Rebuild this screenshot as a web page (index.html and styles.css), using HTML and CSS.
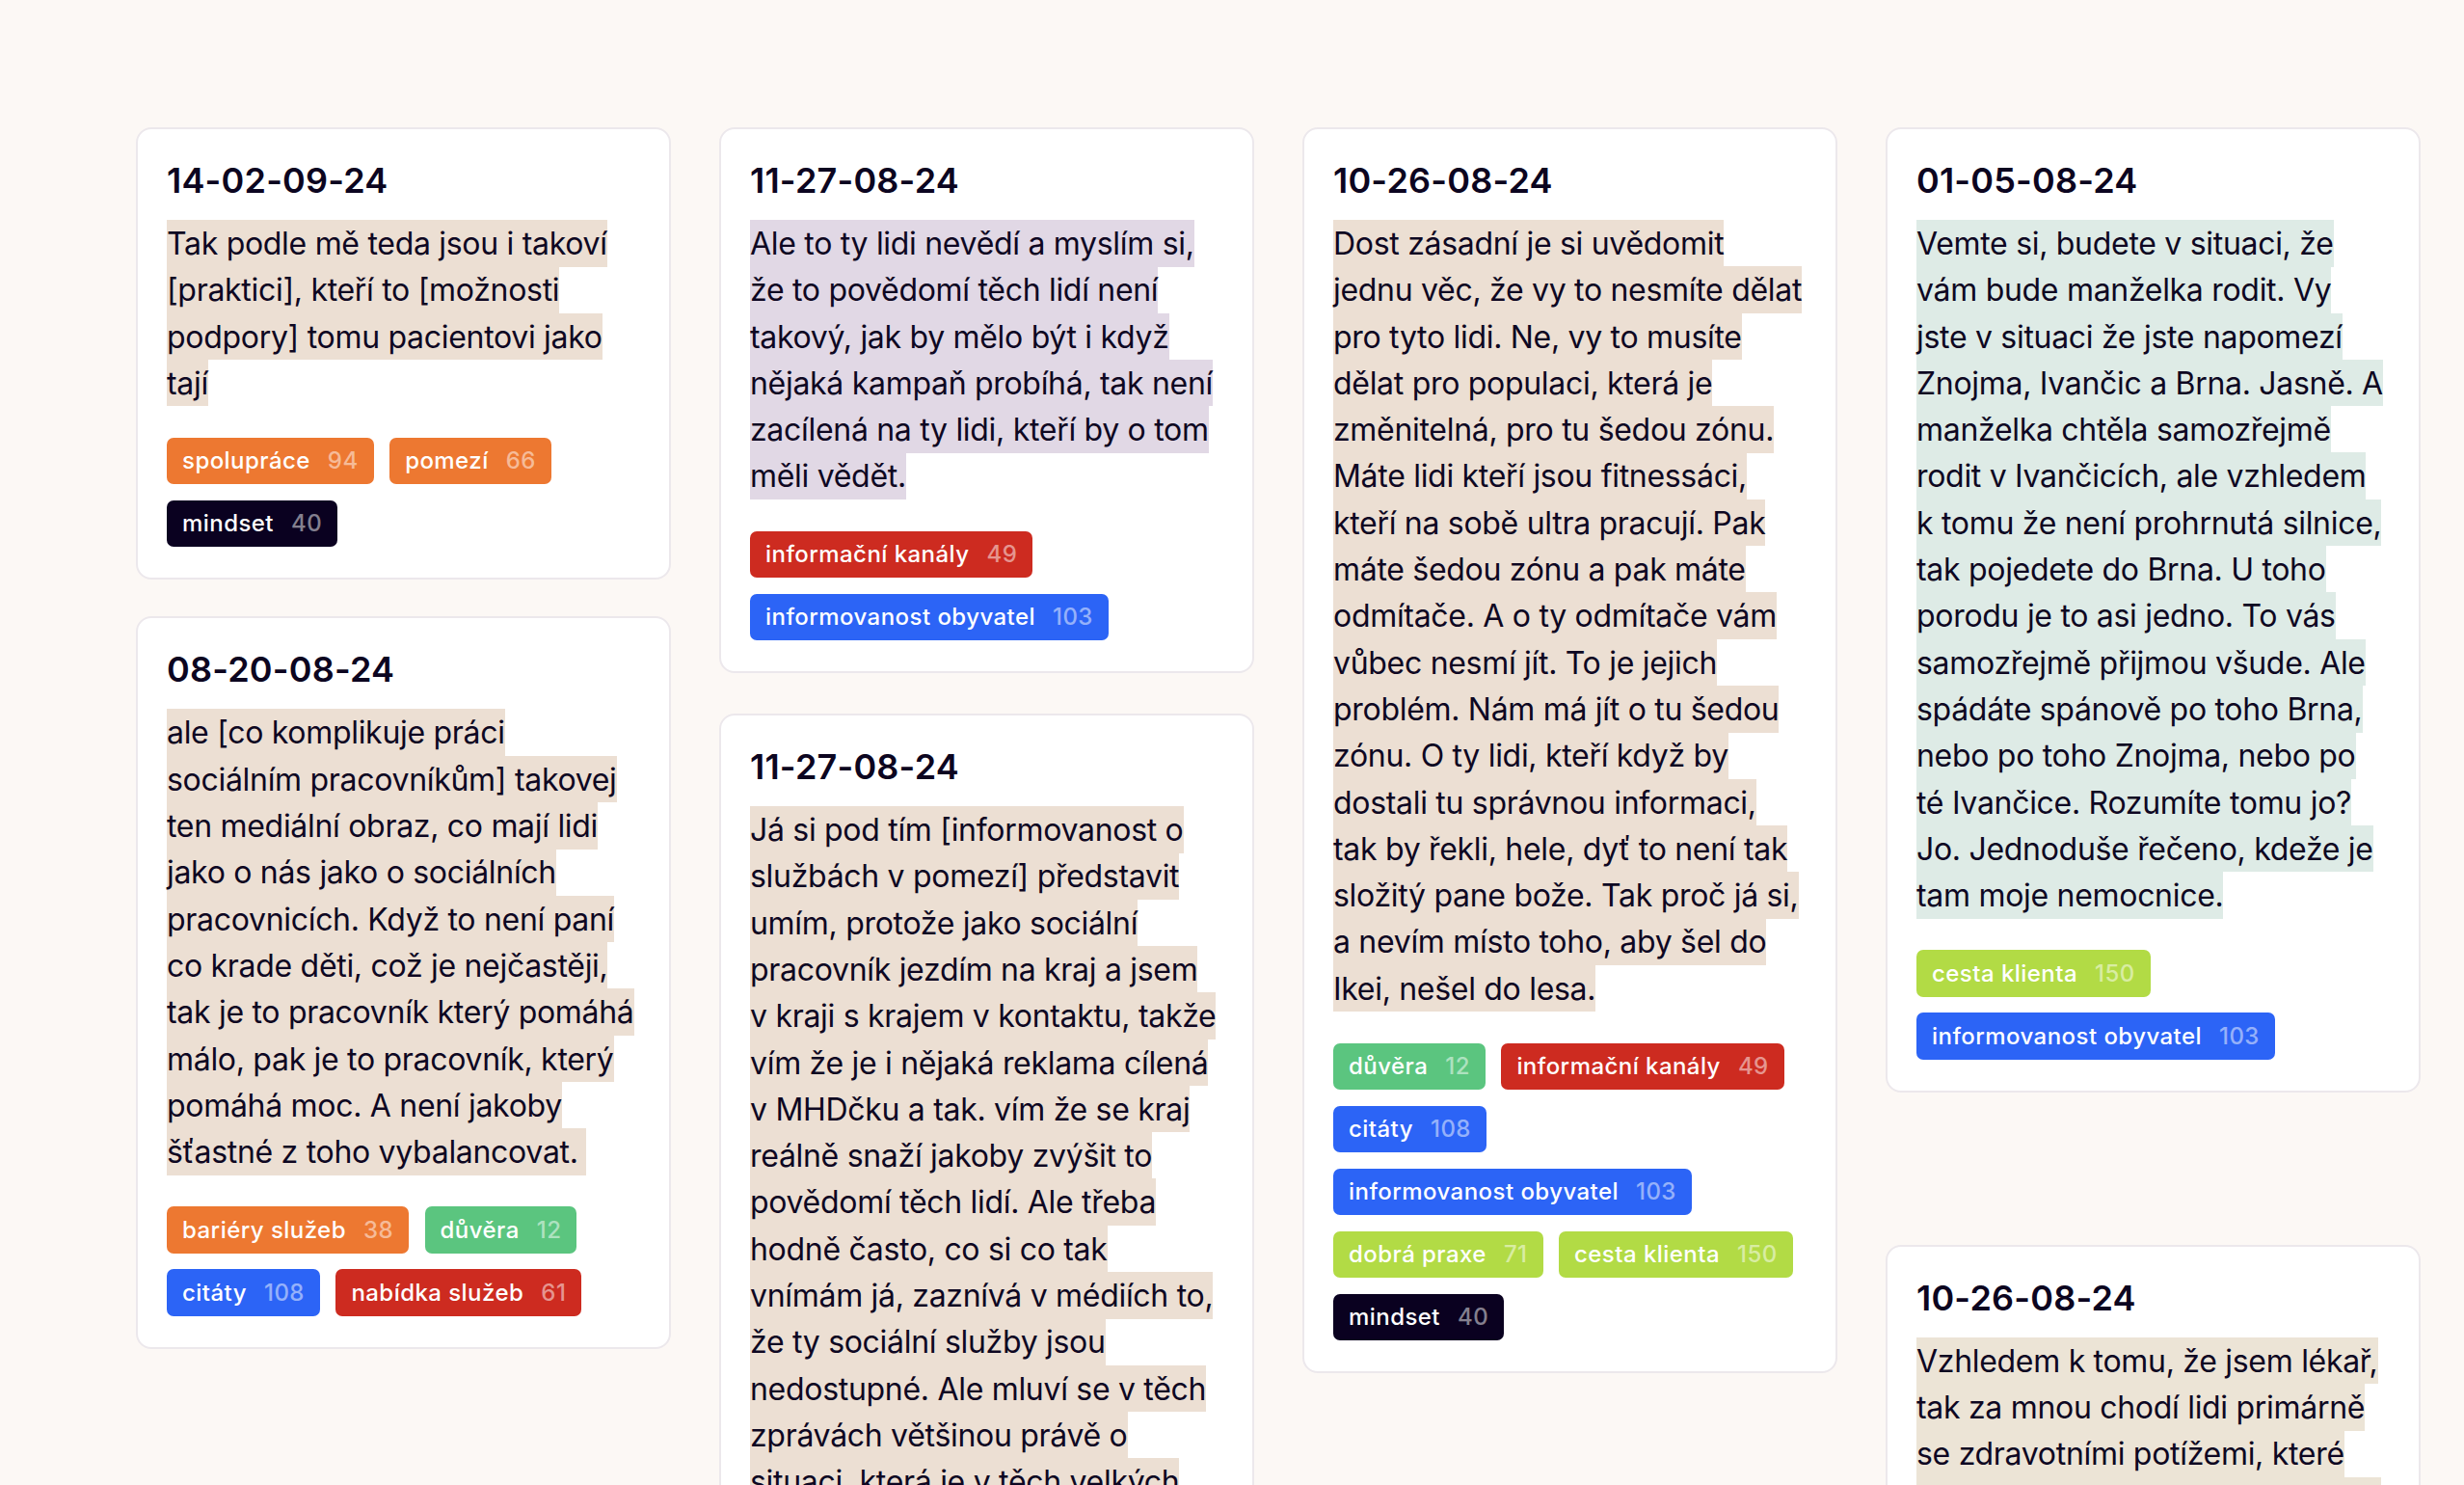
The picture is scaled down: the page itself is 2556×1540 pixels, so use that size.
FILE: index.html
```html
<!DOCTYPE html>
<html lang="cs">
<head>
<meta charset="utf-8">
<title>Citáty</title>
<link rel="stylesheet" href="styles.css">
</head>
<body>
<main class="board">
  <div class="column">
    <article class="card">
      <h2 class="card-title">14-02-09-24</h2>
      <p class="quote"><span class="quote-text hl-beige">Tak podle mě teda jsou i takoví<br>[praktici], kteří to [možnosti<br>podpory] tomu pacientovi jako<br>tají</span></p>
      <div class="tags">
        <span class="tag tag--orange">spolupráce<span class="tag-count">94</span></span>
        <span class="tag tag--orange">pomezí<span class="tag-count">66</span></span>
        <span class="tag tag--dark">mindset<span class="tag-count">40</span></span>
      </div>
    </article>
    <article class="card">
      <h2 class="card-title">08-20-08-24</h2>
      <p class="quote"><span class="quote-text hl-beige">ale [co komplikuje práci<br>sociálním pracovníkům] takovej<br>ten mediální obraz, co mají lidi<br>jako o nás jako o sociálních<br>pracovnicích. Když to není paní<br>co krade děti, což je nejčastěji,<br>tak je to pracovník který pomáhá<br>málo, pak je to pracovník, který<br>pomáhá moc. A není jakoby<br>šťastné z toho vybalancovat.&nbsp;</span></p>
      <div class="tags">
        <span class="tag tag--orange">bariéry služeb<span class="tag-count">38</span></span>
        <span class="tag tag--green">důvěra<span class="tag-count">12</span></span>
        <span class="tag tag--blue">citáty<span class="tag-count">108</span></span>
        <span class="tag tag--red">nabídka služeb<span class="tag-count">61</span></span>
      </div>
    </article>
  </div>

  <div class="column column--loose">
    <article class="card">
      <h2 class="card-title">11-27-08-24</h2>
      <p class="quote"><span class="quote-text hl-lavender">Ale to ty lidi nevědí a myslím si,<br>že to povědomí těch lidí není<br>takový, jak by mělo být i když<br>nějaká kampaň probíhá, tak není<br>zacílená na ty lidi, kteří by o tom<br>měli vědět.</span></p>
      <div class="tags">
        <span class="tag tag--red">informační kanály<span class="tag-count">49</span></span>
        <span class="tag tag--blue">informovanost obyvatel<span class="tag-count">103</span></span>
      </div>
    </article>
    <article class="card">
      <h2 class="card-title">11-27-08-24</h2>
      <p class="quote"><span class="quote-text hl-beige">Já si pod tím [informovanost o<br>službách v pomezí] představit<br>umím, protože jako sociální<br>pracovník jezdím na kraj a jsem<br>v kraji s krajem v kontaktu, takže<br>vím že je i nějaká reklama cílená<br>v MHDčku a tak. vím že se kraj<br>reálně snaží jakoby zvýšit to<br>povědomí těch lidí. Ale třeba<br>hodně často, co si co tak<br>vnímám já, zaznívá v médiích to,<br>že ty sociální služby jsou<br>nedostupné. Ale mluví se v těch<br>zprávách většinou právě o<br>situaci, která je v těch velkých<br>městech, a na venkově to lidi pak vnímají úplně stejně.</span></p>
      <div class="tags">
        <span class="tag tag--blue">informovanost obyvatel<span class="tag-count">103</span></span>
        <span class="tag tag--red">informační kanály<span class="tag-count">49</span></span>
      </div>
    </article>
  </div>

  <div class="column">
    <article class="card">
      <h2 class="card-title">10-26-08-24</h2>
      <p class="quote"><span class="quote-text hl-beige">Dost zásadní je si uvědomit<br>jednu věc, že vy to nesmíte dělat<br>pro tyto lidi. Ne, vy to musíte<br>dělat pro populaci, která je<br>změnitelná, pro tu šedou zónu.<br>Máte lidi kteří jsou fitnessáci,<br>kteří na sobě ultra pracují. Pak<br>máte šedou zónu a pak máte<br>odmítače. A o ty odmítače vám<br>vůbec nesmí jít. To je jejich<br>problém. Nám má jít o tu šedou<br>zónu. O ty lidi, kteří když by<br>dostali tu správnou informaci,<br>tak by řekli, hele, dyť to není tak<br>složitý pane bože. Tak proč já si,<br>a nevím místo toho, aby šel do<br>Ikei, nešel do lesa.</span></p>
      <div class="tags">
        <span class="tag tag--green">důvěra<span class="tag-count">12</span></span>
        <span class="tag tag--red">informační kanály<span class="tag-count">49</span></span>
        <span class="tag tag--blue">citáty<span class="tag-count">108</span></span>
        <span class="tag tag--blue">informovanost obyvatel<span class="tag-count">103</span></span>
        <span class="tag tag--lime">dobrá praxe<span class="tag-count">71</span></span>
        <span class="tag tag--lime">cesta klienta<span class="tag-count">150</span></span>
        <span class="tag tag--dark">mindset<span class="tag-count">40</span></span>
      </div>
    </article>
  </div>

  <div class="column">
    <article class="card">
      <h2 class="card-title">01-05-08-24</h2>
      <p class="quote"><span class="quote-text hl-teal">Vemte si, budete v situaci, že<br>vám bude manželka rodit. Vy<br>jste v situaci že jste napomezí<br>Znojma, Ivančic a Brna. Jasně. A<br>manželka chtěla samozřejmě<br>rodit v Ivančicích, ale vzhledem<br>k tomu že není prohrnutá silnice,<br>tak pojedete do Brna. U toho<br>porodu je to asi jedno. To vás<br>samozřejmě přijmou všude. Ale<br>spádáte spánově po toho Brna,<br>nebo po toho Znojma, nebo po<br>té Ivančice. Rozumíte tomu jo?<br>Jo. Jednoduše řečeno, kdeže je<br>tam moje nemocnice.</span></p>
      <div class="tags">
        <span class="tag tag--lime">cesta klienta<span class="tag-count">150</span></span>
        <span class="tag tag--blue">informovanost obyvatel<span class="tag-count">103</span></span>
      </div>
    </article>
    <article class="card card--spaced">
      <h2 class="card-title">10-26-08-24</h2>
      <p class="quote"><span class="quote-text hl-sand">Vzhledem k tomu, že jsem lékař,<br>tak za mnou chodí lidi primárně<br>se zdravotními potížemi, které<br>souvisí s tím, jak daleko to mají k nejbližší pomoci.</span></p>
      <div class="tags">
        <span class="tag tag--lime">cesta klienta<span class="tag-count">150</span></span>
      </div>
    </article>
  </div>
</main>
</body>
</html>
```
FILE: styles.css
```css
* {
  box-sizing: border-box;
}

html,
body {
  margin: 0;
  padding: 0;
}

body {
  height: 100vh;
  overflow: hidden;
  background: #fcf8f5;
  color: #0e0722;
  font-family: Inter, "Noto Sans", "Liberation Sans", sans-serif;
}

.board {
  display: flex;
  align-items: flex-start;
  gap: 50px;
  padding: 132px 0 0 141px;
}

.column {
  width: 555px;
  flex: 0 0 555px;
  display: flex;
  flex-direction: column;
  gap: 38px;
}

.column--loose {
  gap: 42px;
}

.card {
  background: #ffffff;
  border: 2px solid #ece8ec;
  border-radius: 16px;
  padding: 30px 30px 32px;
}

.card--spaced {
  margin-top: 120px;
}

.card-title {
  margin: 0 0 18px;
  font-size: 36px;
  line-height: 46.8px;
  font-weight: 600;
  color: #0c0520;
  letter-spacing: 0.2px;
}

.quote {
  margin: 0;
  font-size: 32px;
  line-height: 48.3px;
  font-weight: 400;
  letter-spacing: -0.3px;
}

.quote-text {
  padding: 4.8px 0;
}

.hl-beige {
  background: #ecdfd3;
}

.hl-lavender {
  background: #e1d8e5;
}

.hl-teal {
  background: #deebe6;
}

.hl-sand {
  background: #ece4d6;
}

.tags {
  display: flex;
  flex-wrap: wrap;
  gap: 16.5px;
  margin-top: 32px;
}

.tag {
  display: inline-flex;
  align-items: center;
  gap: 18px;
  height: 48.5px;
  padding: 0 16px;
  border-radius: 7px;
  color: #ffffff;
  font-size: 24px;
  font-weight: 500;
  letter-spacing: 0.45px;
  line-height: 1;
  white-space: nowrap;
}

.tag-count {
  color: rgba(255, 255, 255, 0.5);
}

.tag--orange {
  background: #ed7831;
}

.tag--green {
  background: #5bc57f;
}

.tag--blue {
  background: #2c64f6;
}

.tag--red {
  background: #cd2b20;
}

.tag--lime {
  background: #b2db45;
}

.tag--dark {
  background: #0a0120;
}
```
